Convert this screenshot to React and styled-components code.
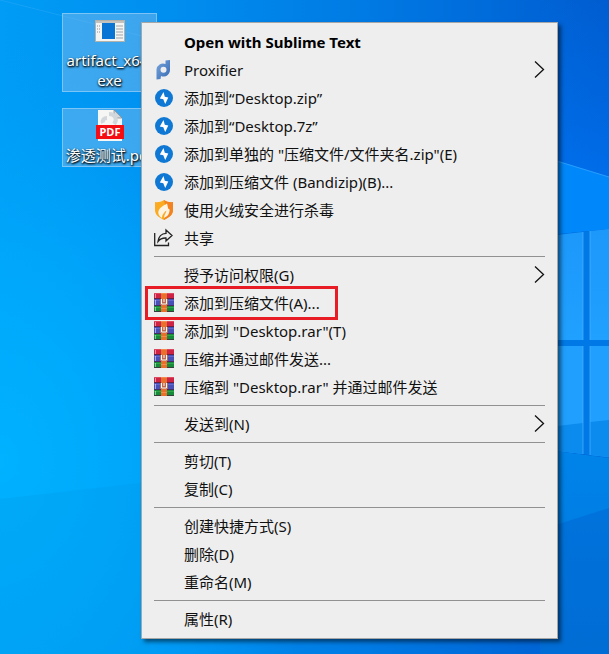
import React from 'react';
import styled, { createGlobalStyle, css } from 'styled-components';

const GlobalStyle = createGlobalStyle`
  * {
    box-sizing: border-box;
  }
  body {
    margin: 0;
    font-family: 'Noto Sans', 'Noto Sans CJK SC', sans-serif;
    font-size: 15px;
  }
`;

const Desktop = styled.main`
  position: relative;
  min-height: 100vh;
  padding: 13px 62px;
  overflow: hidden;
  background: #0088ee;
`;

const WallpaperSvg = styled.svg`
  position: absolute;
  inset: 0;
  width: 100%;
  height: 100%;
`;

const Shortcuts = styled.div`
  position: relative;
  display: flex;
  flex-direction: column;
  align-items: flex-start;
  gap: 16px;
`;

const Shortcut = styled.button`
  display: flex;
  flex-direction: column;
  align-items: center;
  width: 95px;
  padding: 0 0 1px;
  border: 1px solid rgba(150, 208, 250, 0.7);
  background: rgba(120, 185, 235, 0.5);
  color: #fff;
  font: inherit;
  line-height: 20px;
  text-shadow: 1px 1px 2px #000, 0 1px 2px rgba(0, 0, 0, 0.8);

  svg {
    display: block;
  }
`;

const Menu = styled.ul`
  position: absolute;
  top: 22px;
  left: 141px;
  width: 417px;
  margin: 0;
  padding: 5px 0;
  list-style: none;
  border: 1px solid #a6a6a6;
  background: #eeeeee;
  box-shadow: 3px 3px 4px rgba(0, 0, 0, 0.5);
`;

const MenuRow = styled.li`
  position: relative;
`;

const MenuButton = styled.button`
  display: grid;
  grid-template-columns: 20px 1fr 12px;
  align-items: center;
  column-gap: 10px;
  width: 100%;
  height: 28px;
  padding: 0 12px;
  border: 0;
  background: transparent;
  color: #111;
  font: inherit;
  line-height: 20px;
  text-align: left;
  white-space: nowrap;
  ${props => props.$bold && css`
    color: #000;
    font-weight: 700;
  `}

  svg {
    display: block;
  }
`;

const Separator = styled.li`
  height: 1px;
  margin: 4px 12px;
  background: #919191;
`;

const RedFrame = styled.span`
  position: absolute;
  top: -3px;
  bottom: -3px;
  left: 3px;
  width: 193px;
  border: 3px solid #e81c24;
  pointer-events: none;
`;

const Wallpaper = () => (
  <WallpaperSvg viewBox="0 0 609 654" preserveAspectRatio="xMaxYMid slice" aria-hidden="true">
    <defs>
      <linearGradient id="base" x1="0" y1="0" x2="1" y2="0">
        <stop offset="0" stopColor="#009cf5" />
        <stop offset="0.25" stopColor="#0090f0" />
        <stop offset="0.6" stopColor="#007ae4" />
        <stop offset="1" stopColor="#005cd0" />
      </linearGradient>
      <radialGradient id="glow" gradientUnits="userSpaceOnUse" cx="0" cy="0" r="1" gradientTransform="translate(0 460) scale(330 420)">
        <stop offset="0" stopColor="#00b2ff" />
        <stop offset="0.5" stopColor="#00aafc" stopOpacity="0.75" />
        <stop offset="1" stopColor="#00a0fa" stopOpacity="0" />
      </radialGradient>
      <linearGradient id="sky" x1="0" y1="0" x2="0" y2="1">
        <stop offset="0" stopColor="#0070f0" stopOpacity="0" />
        <stop offset="1" stopColor="#0074f4" stopOpacity="0.7" />
      </linearGradient>
      <linearGradient id="pane" x1="0" y1="0" x2="0" y2="1">
        <stop offset="0" stopColor="#1c98fb" />
        <stop offset="1" stopColor="#20a0ff" />
      </linearGradient>
      <linearGradient id="floor" x1="0" y1="0" x2="0" y2="1">
        <stop offset="0" stopColor="#0084ea" />
        <stop offset="1" stopColor="#0074da" />
      </linearGradient>
    </defs>
    <rect width="609" height="654" fill="url(#base)" />
    <rect width="609" height="654" fill="url(#glow)" />
    <path d="M0 0 L150 38" stroke="#35adfa" opacity="0.4" />
    <path d="M0 499 L150 482 V654 H0 Z" fill="#0098e8" opacity="0.25" />
    <rect x="540" width="69" height="180" fill="url(#sky)" />
    <path d="M540 155 L609 177 L609 229 L540 236 Z" fill="#0088fb" />
    <path d="M540 156 L609 177" stroke="#299cfc" />
    <path d="M540 236 L609 229 L609 458 L540 448 Z" fill="#0079e6" />
    <path d="M540 237 L583 232 L583 340 L540 340 Z" fill="url(#pane)" />
    <path d="M590 231 L609 229 L609 340 L590 340 Z" fill="url(#pane)" />
    <path d="M540 346 H583 V454 L540 449 Z" fill="#209ffe" />
    <path d="M590 346 H609 V457 L590 455 Z" fill="#209ffe" />
    <path d="M540 428 L583 423 V454 L540 449 Z" fill="#0c8bee" />
    <path d="M590 422 L609 420 V457 L590 455 Z" fill="#0c8bee" />
    <path d="M583 232 V340 M583 346 V454 M590 231 V340 M590 346 V455" stroke="#4cb3ff" opacity="0.7" />
    <path d="M540 449 L609 458 V654 H540 Z" fill="url(#floor)" />
    <path d="M540 530 L609 508 V654 H540 Z" fill="#0064cf" opacity="0.45" />
  </WallpaperSvg>
);

const ExeIcon = () => (
  <svg width="30" height="36" viewBox="0 0 30 36">
    <rect x="0.5" y="6.5" width="29" height="21" fill="#f4f4f2" stroke="#b4b0aa" />
    <path d="M1 8 H29" stroke="#c4c2be" strokeWidth="2" />
    <rect x="7" y="9" width="13" height="16" fill="#0874d4" />
    <path d="M2 12 H5 M2 15 H5 M2 18 H5" stroke="#8c9298" strokeDasharray="1 1" />
    <path d="M21 12 H28 M21 15 H28 M21 18 H28 M21 21 H28 M21 24 H28" stroke="#9fa4a9" />
  </svg>
);

const PdfText = styled.text`
  font-size: 11px;
  font-weight: 700;
  text-shadow: none;
`;

const PdfIcon = () => (
  <svg width="30" height="36" viewBox="0 0 30 36">
    <path d="M3 1 H19 L27 9 V32 H3 Z" fill="#f6f6f4" />
    <path d="M19 1 V9 H27 Z" fill="#d5d8da" stroke="#77828a" strokeWidth="0.7" />
    <path d="M8 14 C7 11 9 9 12 9 M14 5 C20 5 23 10 19 15" fill="none" stroke="#d2d7db" strokeWidth="4" />
    <rect x="1" y="16" width="28" height="14" fill="#f40d12" />
    <PdfText x="15" y="27" fill="#fff" textAnchor="middle">PDF</PdfText>
  </svg>
);

const ProxifierIcon = () => (
  <svg width="20" height="20" viewBox="0 0 20 20">
    <defs>
      <linearGradient id="prox" x1="0" y1="0" x2="1" y2="1">
        <stop offset="0" stopColor="#78a6dc" />
        <stop offset="1" stopColor="#3569b4" />
      </linearGradient>
    </defs>
    <path d="M11.500 0.500 L16 0 V10 A6.500 6.500 0 0 1 7 16 L6.500 19 L2.500 19.500 V9.500 A6.500 6.500 0 0 1 11.500 4 Z" fill="url(#prox)" />
    <circle cx="9.500" cy="9.800" r="3" fill="#eee" />
  </svg>
);

const BandizipIcon = () => (
  <svg width="20" height="20" viewBox="0 0 20 20">
    <circle cx="10" cy="10" r="9" fill="#0f78d4" />
    <path d="M9.500 4 L5.800 10.500 L9.300 11.200 L11.200 16 L14.300 9.500 L10.800 8.800 Z" fill="#fff" />
  </svg>
);

const HuorongIcon = () => (
  <svg width="20" height="20" viewBox="0 0 20 20">
    <path d="M10 0 C13 2 16 2.500 19 2 V10 C19 15 15 17.500 10 20 C5 17.500 1 15 1 10 V2 C4 2.500 7 2 10 0 Z" fill="#fbab20" />
    <path d="M10 0 C13 2 16 2.500 19 2 V10 C19 15 15 17.500 10 20 L12 10 Z" fill="#f28320" />
    <path d="M13 3.500 C9 6 4.500 8 4.300 12.500 C4.300 15 6 17 8 18 C7.800 15 10 12.500 12.500 10.500 C12 13 10 15 10 18 C13.500 16.500 16 13.500 15.500 9 C14 10 14 6.500 13 3.500 Z" fill="#fff4e2" />
  </svg>
);

const ShareIcon = () => (
  <svg width="20" height="20" viewBox="0 0 20 20" fill="none" stroke="#222" strokeWidth="1.300">
    <path d="M0.700 5 V17.500 H14.500 V14.500" />
    <path d="M12 2 L18 7.500 L12 13 V10 C8.500 9.800 6 11 4 13.500 C4.500 9 7.500 5.500 12 5.300 Z" />
  </svg>
);

const WinrarIcon = () => (
  <svg width="20" height="20" viewBox="0 0 20 20">
    <rect y="0" width="20" height="6" fill="#cf2346" />
    <rect y="6" width="20" height="7" fill="#4850b6" />
    <rect y="13" width="20" height="6" fill="#16893a" />
    <path d="M0 0.500 H20" stroke="#dd4a62" />
    <path d="M0 7.500 H20" stroke="#6269cc" />
    <path d="M0 14.500 H20" stroke="#2fa448" />
    <path d="M0 5.500 H20 M0 12.500 H20 M0 18.500 H20" stroke="#432040" opacity="0.7" />
    <path d="M1.500 1 V5 M1.500 7 V12 M1.500 14 V18" stroke="#fff" opacity="0.5" />
    <rect x="7" width="6" height="19" fill="#e8702a" />
    <path d="M7 0.500 H13 M7 15.500 H13" stroke="#f58c4a" />
    <rect x="6" y="6" width="8" height="6" fill="#b96a50" />
    <path d="M7.500 6 V11 H12.500 V6 M10 6 V9" fill="none" stroke="#fff" />
  </svg>
);

const Chevron = () => (
  <svg width="12" height="20" viewBox="0 0 12 20" fill="none" stroke="#111" strokeWidth="1.300">
    <path d="M2 1.500 L10.500 9.500 L2 17.500" />
  </svg>
);

const items = [
  { label: 'Open with Sublime Text', bold: true },
  { label: 'Proxifier', icon: ProxifierIcon, submenu: true },
  { label: '添加到“Desktop.zip”', icon: BandizipIcon },
  { label: '添加到“Desktop.7z”', icon: BandizipIcon },
  { label: '添加到单独的 "压缩文件/文件夹名.zip"(E)', icon: BandizipIcon },
  { label: '添加到压缩文件 (Bandizip)(B)...', icon: BandizipIcon },
  { label: '使用火绒安全进行杀毒', icon: HuorongIcon },
  { label: '共享', icon: ShareIcon },
  null,
  { label: '授予访问权限(G)', submenu: true },
  { label: '添加到压缩文件(A)...', icon: WinrarIcon, framed: true },
  { label: '添加到 "Desktop.rar"(T)', icon: WinrarIcon },
  { label: '压缩并通过邮件发送...', icon: WinrarIcon },
  { label: '压缩到 "Desktop.rar" 并通过邮件发送', icon: WinrarIcon },
  null,
  { label: '发送到(N)', submenu: true },
  null,
  { label: '剪切(T)' },
  { label: '复制(C)' },
  null,
  { label: '创建快捷方式(S)' },
  { label: '删除(D)' },
  { label: '重命名(M)' },
  null,
  { label: '属性(R)' },
];

const MenuItem = ({ label, icon: Icon, bold, submenu, framed }) => (
  <MenuRow role="none">
    <MenuButton type="button" role="menuitem" $bold={bold}>
      {Icon ? <Icon /> : <span />}
      <span>{label}</span>
      {submenu && <Chevron />}
    </MenuButton>
    {framed && <RedFrame />}
  </MenuRow>
);

const App = () => (
  <Desktop>
    <GlobalStyle />
    <Wallpaper />
    <Shortcuts>
      <Shortcut type="button">
        <ExeIcon />
        <span>artifact_x64.<br />exe</span>
      </Shortcut>
      <Shortcut type="button">
        <PdfIcon />
        <span>渗透测试.pdf</span>
      </Shortcut>
    </Shortcuts>
    <Menu role="menu">
      {items.map((item, i) => (
        item ? <MenuItem key={i} {...item} /> : <Separator key={i} role="separator" />
      ))}
    </Menu>
  </Desktop>
);

export default App;
